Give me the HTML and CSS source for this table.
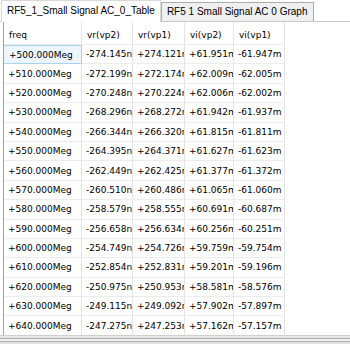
FILE: index.html
```html
<!DOCTYPE html>
<html>
<head>
<meta charset="utf-8">
<link rel="stylesheet" href="styles.css">
</head>
<body>
<div class="window">
  <div class="tabs">
    <div class="tab active">RF5_1_Small Signal AC_0_Table</div>
    <div class="tab">RF5 1 Small Signal AC 0 Graph</div>
  </div>
  <div class="panel">
    <div class="grid">
      <div class="c h">freq</div><div class="c h">vr(vp2)</div><div class="c h">vr(vp1)</div><div class="c h">vi(vp2)</div><div class="c h">vi(vp1)</div>
      <div class="c sel">+500.000Meg</div><div class="c">-274.145n</div><div class="c">+274.121n</div><div class="c">+61.951m</div><div class="c">-61.947m</div>
      <div class="c">+510.000Meg</div><div class="c">-272.199n</div><div class="c">+272.174n</div><div class="c">+62.009m</div><div class="c">-62.005m</div>
      <div class="c">+520.000Meg</div><div class="c">-270.248n</div><div class="c">+270.224n</div><div class="c">+62.006m</div><div class="c">-62.002m</div>
      <div class="c">+530.000Meg</div><div class="c">-268.296n</div><div class="c">+268.272n</div><div class="c">+61.942m</div><div class="c">-61.937m</div>
      <div class="c">+540.000Meg</div><div class="c">-266.344n</div><div class="c">+266.320n</div><div class="c">+61.815m</div><div class="c">-61.811m</div>
      <div class="c">+550.000Meg</div><div class="c">-264.395n</div><div class="c">+264.371n</div><div class="c">+61.627m</div><div class="c">-61.623m</div>
      <div class="c">+560.000Meg</div><div class="c">-262.449n</div><div class="c">+262.425n</div><div class="c">+61.377m</div><div class="c">-61.372m</div>
      <div class="c">+570.000Meg</div><div class="c">-260.510n</div><div class="c">+260.486n</div><div class="c">+61.065m</div><div class="c">-61.060m</div>
      <div class="c">+580.000Meg</div><div class="c">-258.579n</div><div class="c">+258.555n</div><div class="c">+60.691m</div><div class="c">-60.687m</div>
      <div class="c">+590.000Meg</div><div class="c">-256.658n</div><div class="c">+256.634n</div><div class="c">+60.256m</div><div class="c">-60.251m</div>
      <div class="c">+600.000Meg</div><div class="c">-254.749n</div><div class="c">+254.726n</div><div class="c">+59.759m</div><div class="c">-59.754m</div>
      <div class="c">+610.000Meg</div><div class="c">-252.854n</div><div class="c">+252.831n</div><div class="c">+59.201m</div><div class="c">-59.196m</div>
      <div class="c">+620.000Meg</div><div class="c">-250.975n</div><div class="c">+250.953n</div><div class="c">+58.581m</div><div class="c">-58.576m</div>
      <div class="c">+630.000Meg</div><div class="c">-249.115n</div><div class="c">+249.092n</div><div class="c">+57.902m</div><div class="c">-57.897m</div>
      <div class="c">+640.000Meg</div><div class="c">-247.275n</div><div class="c">+247.253n</div><div class="c">+57.162m</div><div class="c">-57.157m</div>
    </div>
  </div>
  <div class="hbar"></div>
</div>
</body>
</html>
```

FILE: styles.css
```css
html, body {
  margin: 0;
  padding: 0;
  background: #ffffff;
}
.window {
  width: 350px;
  height: 344px;
  overflow: hidden;
  display: flex;
  flex-direction: column;
  background: #ffffff;
}
.tabs {
  display: flex;
  align-items: flex-end;
  height: 21px;
  border-bottom: 1px solid #c8c8c8;
  padding-left: 1px;
  font-family: "Liberation Sans", Arial, sans-serif;
  font-size: 10px;
  color: #000;
}
.tab {
  box-sizing: border-box;
  height: 19px;
  line-height: 18px;
  padding: 0 5px;
  background: #f0f0f0;
  border: 1px solid #acacac;
  border-bottom: none;
  white-space: nowrap;
}
.tab.active {
  line-height: 20px;
  background: #ffffff;
  border-color: #d9d9d9;
  margin-bottom: -1px;
  height: 22px;
}
.panel {
  flex: 1;
  margin-left: 3px;
  border-left: 1px solid #a0a0a0;
  background: #ffffff;
  overflow: hidden;
}
.grid {
  display: grid;
  grid-template-columns: 78px 51px 52px 49px 51px;
  grid-template-rows: 23px repeat(15, 19.4px);
  font-family: "DejaVu Sans", Verdana, sans-serif;
  font-size: 9px;
  color: #000;
}
.c {
  box-sizing: border-box;
  border-right: 1px solid #e4e4e4;
  border-bottom: 1px solid #ececec;
  padding-left: 4px;
  white-space: nowrap;
  overflow: hidden;
  display: flex;
  align-items: center;
}
.c.h {
  padding-left: 5px;
  padding-top: 3px;
}
.c.sel {
  background: #eef6fd;
  border: 1px solid #a8d2f2;
  margin-left: -2px;
  padding-left: 6px;
}
.hbar {
  height: 8px;
  border-top: 1px solid #d0d0d0;
  background: linear-gradient(#e8e8e8 0, #e8e8e8 2px, #a8a8a8 2px, #a8a8a8 3px, #f0f0f0 3px, #f0f0f0 5px, #b0b0b0 5px, #b0b0b0 6px, #e0e0e0 6px);
}
```
